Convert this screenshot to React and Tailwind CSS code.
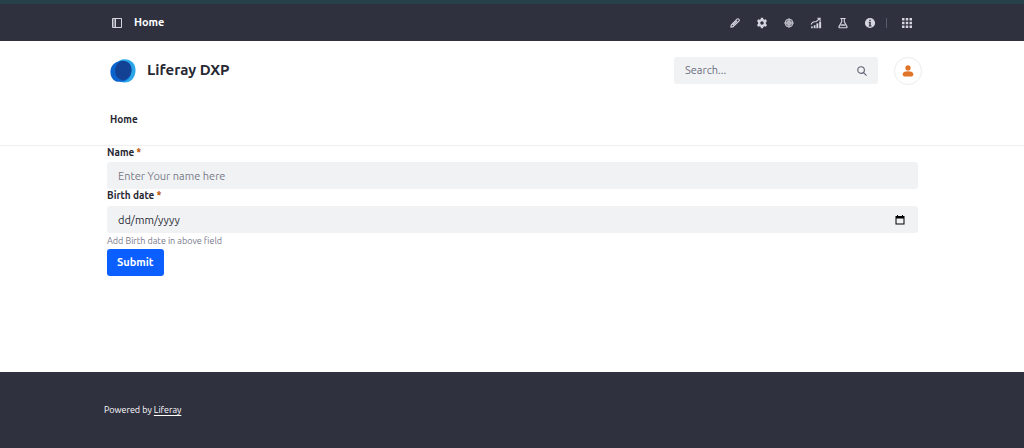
import React, { useState } from 'react';

const fontStack = "font-['Ubuntu','Noto_Sans',sans-serif]";

const navTools = [
  {
    label: 'Edit',
    icon: (
      <path d="M2.4 13.6 3.2 10.4 10.700 2.900a1.600 1.600 0 0 1 2.300 0l.2.2a1.600 1.600 0 0 1 0 2.300L5.600 12.800zM5 11l5.800-5.800" fill="none" stroke="currentColor" strokeWidth="1.5" strokeLinejoin="round" />
    ),
  },
  {
    label: 'Configure page',
    icon: (
      <path fillRule="evenodd" d="M6.600 1h2.800l.4 1.900 1.500.8 1.900-.6 1.400 2.400-1.400 1.400v2.200l1.400 1.400-1.400 2.400-1.900-.6-1.500.8-.4 1.900H6.600l-.4-1.900-1.500-.8-1.900.6-1.400-2.400 1.400-1.400V6.900L1.400 5.500l1.400-2.400 1.900.6 1.500-.8zM8 5.600a2.400 2.400 0 1 0 0 4.800 2.400 2.400 0 0 0 0-4.800z" />
    ),
  },
  {
    label: 'Simulation',
    icon: (
      <>
        <circle cx="8" cy="8" r="5.500" opacity=".45" />
        <g fill="none" stroke="currentColor" strokeWidth="1.200" opacity=".85">
          <circle cx="8" cy="8" r="5.300" />
          <circle cx="8" cy="8" r="2.600" />
          <path d="M8 1.500v13M1.500 8h13" />
        </g>
      </>
    ),
  },
  {
    label: 'Content performance',
    icon: (
      <>
        <rect x="1.500" y="12.500" width="2.200" height="2.500" />
        <rect x="5" y="11" width="2.400" height="4" />
        <rect x="8.500" y="8.500" width="2.600" height="6.500" />
        <rect x="12.200" y="6" width="2.600" height="9" />
        <path d="M1.500 10C2.500 7 5 6 8.500 6l4.500-4M9.800 1.700h3.700v3.500" fill="none" stroke="currentColor" strokeWidth="1.400" />
      </>
    ),
  },
  {
    label: 'A/B test',
    icon: (
      <>
        <path d="M4.500 2h7M6.300 2v4.500L2.700 12.800c-.4.8 0 1.500.9 1.500h8.800c.9 0 1.300-.7.9-1.500L9.700 6.500V2" fill="none" stroke="currentColor" strokeWidth="1.500" />
        <path d="M6 9.500h4l1.600 2.200H4.400z" />
      </>
    ),
  },
  {
    label: 'Information',
    icon: (
      <path fillRule="evenodd" d="M8 1.200a6.800 6.800 0 1 0 0 13.600A6.800 6.800 0 0 0 8 1.200zM7 3.500h2v2H7zM6.300 6.700H9v4.600h1v1.300H6.300v-1.300h.8V8h-.8z" />
    ),
  },
];

function ControlMenu() {
  return (
    <div className="border-t-4 border-[#27414a] bg-[#30313f]">
      <div className="mx-auto flex h-[37px] w-full max-w-[812px] items-center justify-between pr-px pl-1 text-[#d4d5df]">
        <div className="flex items-center gap-2.5">
          <button type="button" aria-label="Toggle product menu" className="flex p-px">
            <svg viewBox="0 0 12 12" className="size-3" fill="none" stroke="currentColor">
              <path d="M1.500 1.500h9v9h-9zM4.500 1.500v9" />
              <path d="M3 2v8" strokeWidth="2" opacity=".5" />
            </svg>
          </button>
          <span className="text-[11px] font-bold text-white">Home</span>
        </div>
        <div className="flex items-center">
          <div className="flex items-center gap-[15px]">
            {navTools.map((tool) => (
              <button key={tool.label} type="button" aria-label={tool.label} className="flex">
                <svg viewBox="0 0 16 16" fill="currentColor" className="size-3">
                  {tool.icon}
                </svg>
              </button>
            ))}
          </div>
          <span className="mx-2.5 h-2.5 w-px bg-[#5a5b6c]" />
          <button type="button" aria-label="Applications" className="mx-1 flex">
            <svg viewBox="0 0 16 16" fill="currentColor" className="size-3 p-px">
              {[0, 6, 12].map((y) => [0, 6, 12].map((x) => (
                <rect key={`${x}-${y}`} x={x} y={y} width="4" height="4" />
              )))}
            </svg>
          </button>
        </div>
      </div>
    </div>
  );
}

function SiteHeader() {
  return (
    <header className="border-b border-[#eeeff3]">
      <div className="mx-auto w-full max-w-[812px] px-1">
        <div className="flex h-[59px] items-center justify-between">
          <a href="#" className="flex items-center gap-[11px]">
            <svg viewBox="0 0 26 26" className="size-[26px]">
              <path d="M14.500 1.300c6.500 0 11 4.200 11 10.900 0 7.300-4.600 12.300-11 12.300C8.500 24.500 5 19.600 5 13.200 5 6 8.500 1.300 14.500 1.300z" fill="#2aa5e8" />
              <path d="M11 3c6.500-.5 10.500 3.300 10.500 9 0 6.500-3.500 10.300-8 11.500-1.500.4-5.500.3-7.500 0C2.500 21.800.4 18.500.4 14 .4 7.500 5 3.500 11 3z" fill="#0b63ce" />
              <path d="M12 2.800c6-.3 9.500 3.700 9.500 9.200 0 5.500-3.700 9.300-8.500 10.300C8.500 21.500 5.200 18 5.200 13c0-4.500 2.300-8.500 6.800-10.200z" fill="#134194" />
            </svg>
            <span className="text-[15px] font-bold text-[#272833]">Liferay DXP</span>
          </a>
          <div className="flex items-center gap-4">
            <div className="flex h-[27px] w-[204px] items-center rounded-[3px] bg-[#f0f2f4] pr-2.5 pl-[11px]">
              <input type="search" aria-label="Search" placeholder="Search..." className="w-full min-w-0 flex-1 bg-transparent text-[11px] text-[#272833] outline-none placeholder:text-[#6b6c7e]" />
              <button type="submit" aria-label="Search" className="flex text-[#5f6070]">
                <svg viewBox="0 0 16 16" className="size-3 p-px" fill="none" stroke="currentColor" strokeWidth="1.800">
                  <circle cx="6.500" cy="6.500" r="5.300" />
                  <path d="m10.500 10.500 4.800 4.800" />
                </svg>
              </button>
            </div>
            <button type="button" aria-label="User profile" className="-mr-2 flex size-7 items-center justify-center rounded-full border border-[#ececf0] text-[#e0752a]">
              <svg viewBox="0 0 12 12" className="size-3" fill="currentColor">
                <circle cx="6" cy="2.900" r="2.600" />
                <path d="M6 6.300c3.500 0 5.300 1.300 5.300 2.900 0 1.600-1.100 2.400-2.600 2.400H3.300C1.800 11.600.7 10.800.7 9.200.7 7.600 2.500 6.300 6 6.300z" />
              </svg>
            </button>
          </div>
        </div>
        <nav className="flex h-[45px] items-start pt-3">
          <a href="#" className="text-[10px] leading-4 font-bold text-[#272833]">Home</a>
        </nav>
      </div>
    </header>
  );
}

function FieldLabel({ htmlFor, children }) {
  return (
    <label htmlFor={htmlFor} className="flex h-4 gap-0.5 text-[10px] leading-[13px] font-bold text-[#272833]">
      {children}
      <span className="text-[#b95000]">*</span>
    </label>
  );
}

function PersonForm() {
  const [name, setName] = useState('');
  const [birthDate, setBirthDate] = useState('');
  const inputClass = 'block h-[27px] w-full rounded-[3px] bg-[#f0f2f4] px-[11px] text-[11px] outline-none';

  return (
    <form className="flex flex-col items-start" onSubmit={(e) => e.preventDefault()}>
      <FieldLabel htmlFor="name">Name</FieldLabel>
      <input
        id="name"
        type="text"
        value={name}
        onChange={(e) => setName(e.target.value)}
        placeholder="Enter Your name here"
        className={`${inputClass} text-[#272833] placeholder:text-[#7a7b88]`}
      />
      <div className="h-[17px]">
        <FieldLabel htmlFor="birthDate">Birth date</FieldLabel>
      </div>
      <div className="relative w-full">
        <input
          id="birthDate"
          type="text"
          value={birthDate}
          onChange={(e) => setBirthDate(e.target.value)}
          placeholder="dd/mm/yyyy"
          aria-describedby="birthDateHelp"
          className={`${inputClass} text-[#272833] placeholder:text-[#272833]`}
        />
        <button type="button" aria-label="Show date picker" className="absolute inset-y-0 right-3 flex items-center text-black">
          <svg viewBox="0 0 12 12" className="size-3" fill="currentColor">
            <path fillRule="evenodd" d="M3 1h1v1h4V1h1v1h1.500v8.500h-9V2H3zM2.500 4.500v5h7v-5z" />
          </svg>
        </button>
      </div>
      <p id="birthDateHelp" className="h-4 text-[9px] leading-[17px] text-[#77788a]">Add Birth date in above field</p>
      <button type="submit" className="h-[27px] rounded-[3px] bg-[#0b5fff] px-2.5 text-[11px] font-bold text-white">
        Submit
      </button>
    </form>
  );
}

export default function App() {
  return (
    <div className={`flex min-h-screen flex-col bg-white ${fontStack}`}>
      <ControlMenu />
      <SiteHeader />
      <main className="mx-auto w-full max-w-[812px] flex-1 pl-px">
        <PersonForm />
      </main>
      <footer className="bg-[#30313f] py-[30px]">
        <p className="mx-auto w-full max-w-[816px] text-[9px] leading-4 text-white">
          Powered by{' '}
          <a href="#" className="underline underline-offset-2">Liferay</a>
        </p>
      </footer>
    </div>
  );
}
